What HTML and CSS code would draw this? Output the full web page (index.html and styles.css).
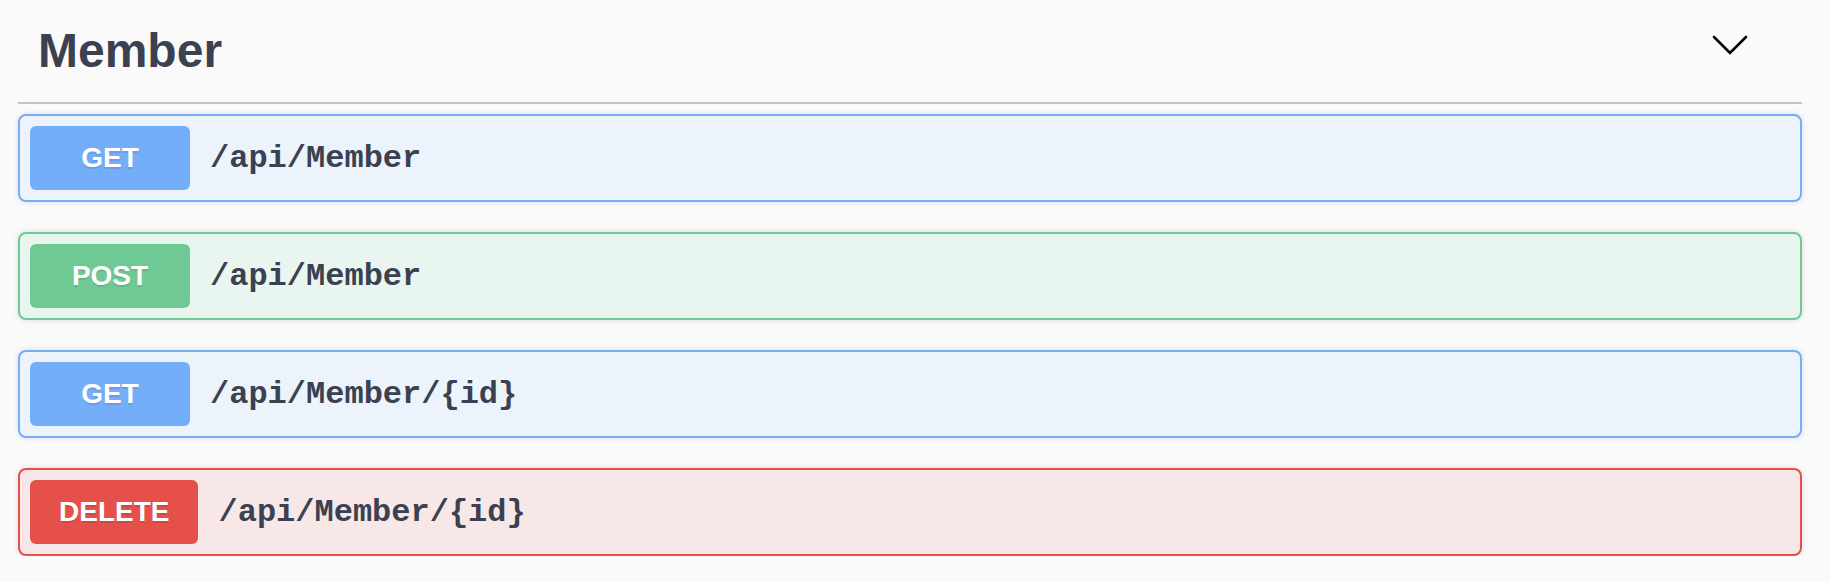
FILE: index.html
```html
<!DOCTYPE html>
<html>
<head>
<meta charset="utf-8">
<link rel="stylesheet" href="styles.css">
<title>Member</title>
</head>
<body>
<div class="tag-section">
  <h4 class="tag-header">
    <span class="tag-title">Member</span>
    <button class="tag-toggle" aria-label="collapse">
      <svg width="36" height="22" viewBox="0 0 36 22"><polyline points="2,2 18,18 34,2" fill="none" stroke="#000" stroke-width="2.6" stroke-linecap="round" stroke-linejoin="miter"/></svg>
    </button>
  </h4>
  <div class="op-list">
    <div class="opblock get">
      <span class="method">GET</span>
      <span class="path">/api/Member</span>
    </div>
    <div class="opblock post">
      <span class="method">POST</span>
      <span class="path">/api/Member</span>
    </div>
    <div class="opblock get">
      <span class="method">GET</span>
      <span class="path">/api/Member/{id}</span>
    </div>
    <div class="opblock delete">
      <span class="method">DELETE</span>
      <span class="path">/api/Member/{id}</span>
    </div>
  </div>
</div>
</body>
</html>
```
FILE: styles.css
```css
html, body {
  margin: 0;
  padding: 0;
  background: #fafafa;
}
body {
  font-family: "Liberation Sans", Arial, sans-serif;
  color: #3b4151;
}
.tag-section {
  padding: 0 28px 0 18px;
}
.tag-header {
  margin: 0;
  height: 102px;
  display: flex;
  align-items: center;
  justify-content: space-between;
  padding: 0 54px 0 20px;
  border-bottom: 2px solid #c2c4c8;
}
.tag-title {
  font-size: 48px;
  line-height: 54px;
  font-weight: 700;
  color: #3b4151;
}
.tag-toggle {
  border: none;
  background: none;
  padding: 0;
  margin: 0 0 10px 0;
  display: flex;
  cursor: pointer;
}
.op-list {
  margin-top: 10px;
  display: flex;
  flex-direction: column;
  gap: 30px;
}
.opblock {
  display: flex;
  align-items: center;
  padding: 10px;
  border: 2px solid;
  border-radius: 8px;
  box-shadow: 0 0 6px rgba(0, 0, 0, 0.12);
}
.method {
  box-sizing: border-box;
  min-width: 160px;
  height: 64px;
  padding: 0 29px;
  border-radius: 6px;
  color: #fff;
  font-size: 28px;
  font-weight: 700;
  line-height: 64px;
  text-align: center;
  text-shadow: 0 2px 0 rgba(0, 0, 0, 0.1);
}
.path {
  padding: 0 20px;
  font-family: "Liberation Mono", "Courier New", monospace;
  font-weight: 700;
  font-size: 32px;
  color: #3b4151;
}
.get {
  border-color: #74aef8;
  background: #ecf3fb;
}
.get .method {
  background: #74aef8;
}
.post {
  border-color: #6fc995;
  background: #e9f6ef;
}
.post .method {
  background: #6fc995;
}
.delete {
  border-color: #e6504b;
  background: #f8e7e7;
}
.delete .method {
  background: #e6504b;
}
```
